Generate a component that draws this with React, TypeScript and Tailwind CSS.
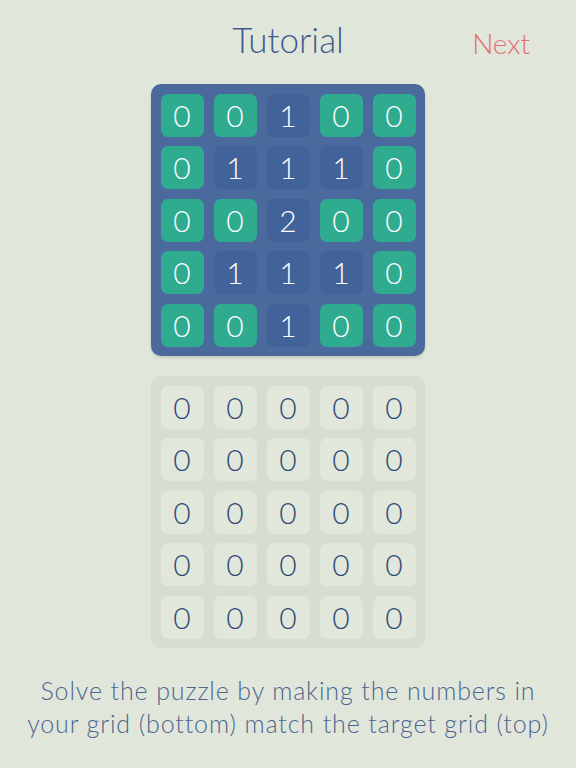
const target = [
  [0, 0, 1, 0, 0],
  [0, 1, 1, 1, 0],
  [0, 0, 2, 0, 0],
  [0, 1, 1, 1, 0],
  [0, 0, 1, 0, 0],
];

function TargetGrid() {
  return (
    <div className="grid grid-cols-5 gap-x-[10px] gap-y-[9.5px] p-[9.5px] rounded-[10px] bg-[#4a699c] shadow-[0_2px_3px_rgba(0,0,0,0.12)]">
      {target.flatMap((row, r) =>
        row.map((v, c) => (
          <div
            key={`${r}-${c}`}
            className={`w-[43px] h-[43px] rounded-[7px] flex items-center justify-center text-[30px] font-light text-white ${
              v === 0 ? 'bg-[#2fab8f]' : 'bg-[#42629a]'
            }`}
          >
            {v}
          </div>
        ))
      )}
    </div>
  );
}

function PlayerGrid() {
  return (
    <div className="grid grid-cols-5 gap-x-[10px] gap-y-[9.5px] p-[9.5px] rounded-[10px] bg-[#d7ddd1]">
      {target.flatMap((row, r) =>
        row.map((_, c) => (
          <div
            key={`${r}-${c}`}
            className="w-[43px] h-[43px] rounded-[7px] flex items-center justify-center text-[30px] font-light text-[#2f4c78] bg-[#e2e7dc]"
          >
            0
          </div>
        ))
      )}
    </div>
  );
}

export default function App() {
  return (
    <div className="w-[576px] h-[768px] bg-[#e1e6db] flex flex-col items-center font-['Lato',sans-serif]">
      <div className="relative w-full h-[84px] flex items-center justify-center">
        <h1 className="text-[35px] font-light text-[#3f5c8c] -mt-[5px]">Tutorial</h1>
        <span className="absolute right-[46px] top-[22px] text-[28px] font-light text-[#e36f6f]">Next</span>
      </div>
      <TargetGrid />
      <div className="h-[20px]" />
      <PlayerGrid />
      <p className="mt-[26px] text-center text-[25px] leading-[33px] tracking-[0.035em] font-light text-[#4b6690]">
        Solve the puzzle by making the numbers in
        <br />
        your grid (bottom) match the target grid (top)
      </p>
    </div>
  );
}
